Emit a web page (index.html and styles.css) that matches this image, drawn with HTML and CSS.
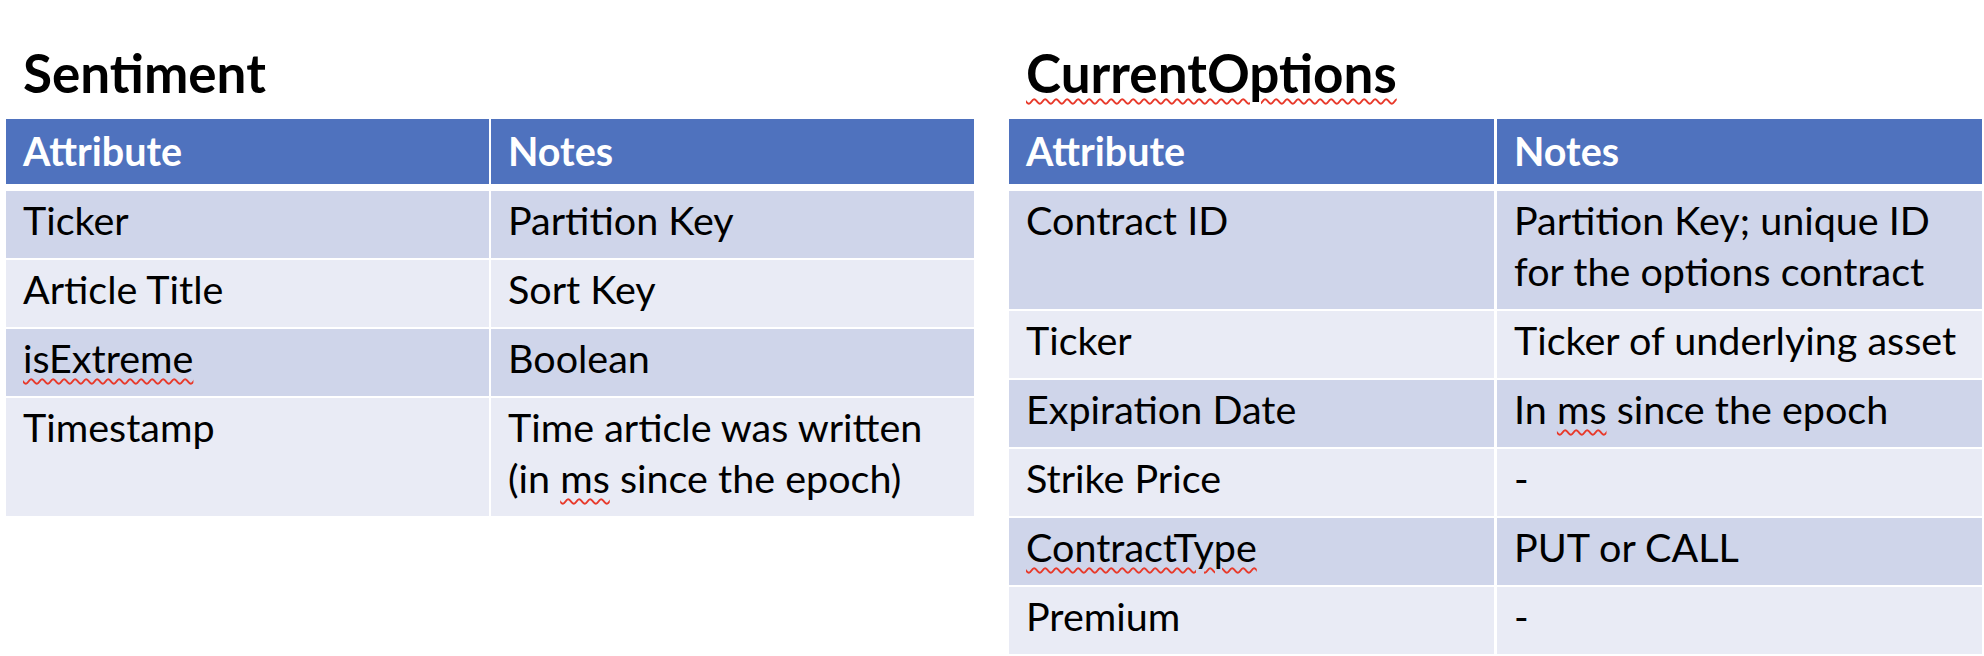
FILE: index.html
```html
<!DOCTYPE html>
<html>
<head>
<meta charset="utf-8">
<link rel="stylesheet" href="styles.css">
</head>
<body>
<div class="page">
  <section class="panel">
    <h2 class="title">Sentiment</h2>
    <div class="table">
      <div class="cell head">Attribute</div><div class="cell head">Notes</div>
      <div class="cell dark">Ticker</div><div class="cell dark">Partition Key</div>
      <div class="cell light">Article Title</div><div class="cell light">Sort Key</div>
      <div class="cell dark"><span class="sq">isExtreme</span></div><div class="cell dark">Boolean</div>
      <div class="cell light">Timestamp</div><div class="cell light">Time article was written (in <span class="sq">ms</span> since the epoch)</div>
    </div>
  </section>
  <section class="panel">
    <h2 class="title"><span class="sq">CurrentOptions</span></h2>
    <div class="table wide-gap">
      <div class="cell head">Attribute</div><div class="cell head">Notes</div>
      <div class="cell dark">Contract ID</div><div class="cell dark">Partition Key; unique ID for the options contract</div>
      <div class="cell light">Ticker</div><div class="cell light">Ticker of underlying asset</div>
      <div class="cell dark">Expiration Date</div><div class="cell dark">In <span class="sq">ms</span> since the epoch</div>
      <div class="cell light">Strike Price</div><div class="cell light">-</div>
      <div class="cell dark"><span class="sq">ContractType</span></div><div class="cell dark">PUT or CALL</div>
      <div class="cell light">Premium</div><div class="cell light">-</div>
    </div>
  </section>
</div>
</body>
</html>
```
FILE: styles.css
```css
html, body { margin: 0; padding: 0; background: #fff; }
body { font-family: "Lato", "Liberation Sans", sans-serif; color: #000; }
.page {
  display: grid;
  grid-template-columns: 968px 973px;
  column-gap: 35px;
  padding-left: 6px;
}
.title {
  margin: 0 0 20px 0;
  padding: 46px 0 0 17px;
  font-size: 53px;
  line-height: 53px;
  font-weight: 700;
}
.table {
  display: grid;
  grid-template-columns: 1fr 1fr;
  column-gap: 2px;
  row-gap: 2px;
}
.table.wide-gap { column-gap: 3px; }
.cell {
  padding: 3px 17px 13px;
  font-size: 39.5px;
  line-height: 51px;
}
.cell.head {
  background: #4f72be;
  color: #fff;
  font-weight: 700;
  padding: 6px 17px 8px;
  margin-bottom: 5px;
}
.cell.dark { background: #cfd5ea; }
.cell.light { background: #e9ebf5; }
.sq {
  text-decoration: underline wavy #e8392a;
  text-decoration-thickness: 1.5px;
  text-underline-offset: 5px;
}
```
